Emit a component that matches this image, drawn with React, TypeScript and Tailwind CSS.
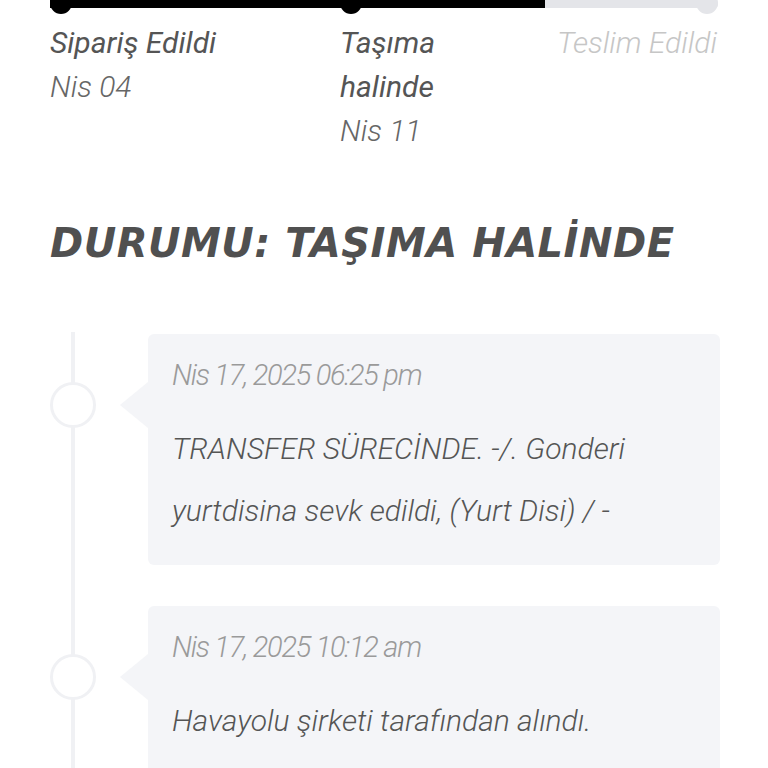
import React from 'react';

const steps = [
  { title: ['Sipariş Edildi'], date: 'Nis 04', done: true, width: 'w-[290px]' },
  { title: ['Taşıma', 'halinde'], date: 'Nis 11', done: true, width: 'w-[217px]' },
  { title: ['Teslim Edildi'], date: '', done: false, width: 'flex-1' },
];

const events = [
  {
    date: 'Nis 17, 2025 06:25 pm',
    lines: ['TRANSFER SÜRECİNDE. -/. Gonderi', 'yurtdisina sevk edildi, (Yurt Disi) / -'],
  },
  {
    date: 'Nis 17, 2025 10:12 am',
    lines: ['Havayolu şirketi tarafından alındı.'],
  },
];

const App = () => {
  return (
    <div className="w-[768px] h-[768px] overflow-hidden bg-white font-['Roboto',sans-serif]">
      <div className="px-[50px]">
        {/* Progress bar */}
        <div className="relative h-[14px]">
          <div className="flex h-[8px]">
            <div className="w-[495px] bg-black" />
            <div className="flex-1 bg-[#e4e5e9] rounded-r-full" />
          </div>
          <div className="absolute left-0 top-[-8px] w-[22px] h-[22px] rounded-full bg-black" />
          <div className="absolute left-[290px] top-[-8px] w-[22px] h-[22px] rounded-full bg-black" />
          <div className="absolute right-0 top-[-8px] w-[22px] h-[22px] rounded-full bg-[#e4e5e9]" />
        </div>

        {/* Step labels */}
        <div className="flex mt-[7px] text-[30px] leading-[44px] italic">
          {steps.map((s, i) => (
            <div key={i} className={`${s.width} overflow-hidden whitespace-nowrap`}>
              {s.title.map((t) => (
                <div key={t} className={s.done ? 'text-[#555555]' : 'text-[#c6c6c6] font-light'}>
                  {t}
                </div>
              ))}
              {s.date && <div className="font-light text-[#666666]">{s.date}</div>}
            </div>
          ))}
        </div>

        {/* Status heading */}
        <h1 className="mt-[66px] text-[40px] leading-[48px] font-bold italic text-[#505050] font-['DejaVu_Sans',sans-serif] tracking-[0.5px]">
          DURUMU: TAŞIMA HALİNDE
        </h1>

        {/* Timeline */}
        <div className="relative mt-[65px] mr-[-2px]">
          <div className="absolute left-[21px] top-0 bottom-0 w-[4px] bg-[#f0f1f4]" />
          <div className="flex flex-col gap-[41px] pt-[2px]">
            {events.map((e, i) => (
              <div key={i} className="flex">
                <div className="w-[98px] shrink-0">
                  <div className="relative mt-[48px] w-[46px] h-[46px] rounded-full bg-white border-[3px] border-[#f0f1f4]" />
                </div>
                <div className="relative flex-1 bg-[#f4f5f8] rounded-[6px] pl-[24px] pr-[20px] pt-[19px] pb-[23px]">
                  <div className="absolute left-[-28px] top-[48px] w-0 h-0 border-y-[23px] border-y-transparent border-r-[28px] border-r-[#f4f5f8]" />
                  <div className="text-[29px] leading-[44px] italic font-light tracking-[-1.3px] text-[#9a9a9a]">{e.date}</div>
                  <div className="mt-[21px] text-[30px] leading-[62px] italic font-light text-[#555555]">
                    {e.lines.map((l) => (
                      <div key={l}>{l}</div>
                    ))}
                  </div>
                </div>
              </div>
            ))}
          </div>
        </div>
      </div>
    </div>
  );
};

export default App;
